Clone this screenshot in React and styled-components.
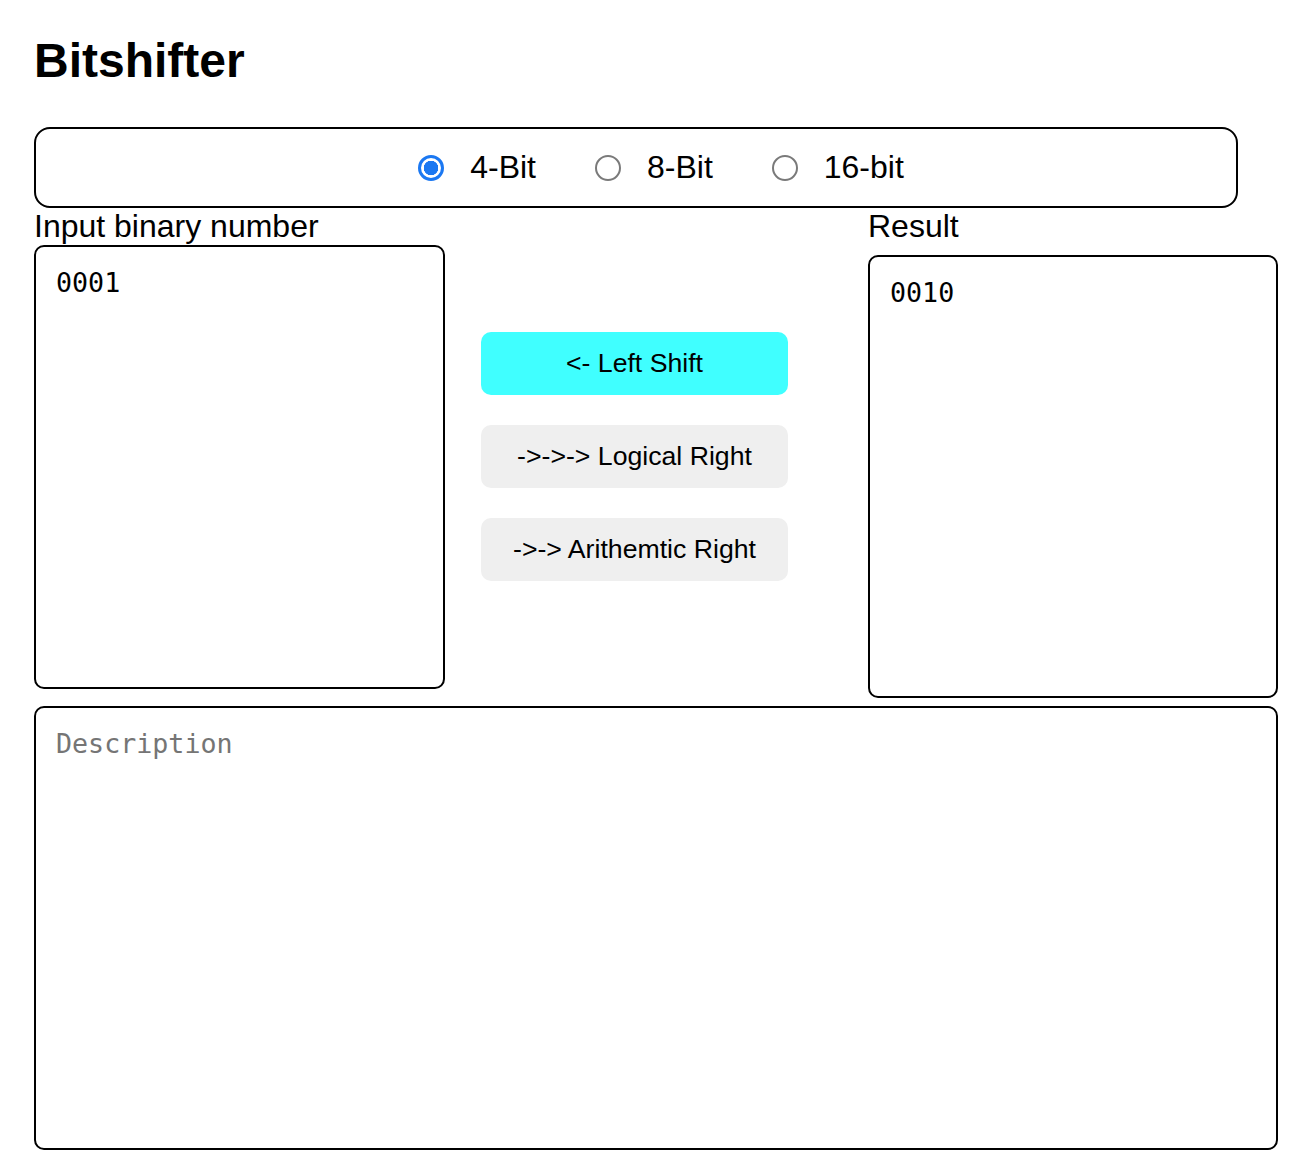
import React, { useState } from 'react'
import styled, { createGlobalStyle } from 'styled-components';

const GlobalStyle = createGlobalStyle`
    body {
        margin: 0;
        background: #ffffff;
        font-family: "Liberation Sans", Arial, Helvetica, sans-serif;
        color: #000;
    }
`

const Page = styled.div`
    padding: 34px 28px 26px 34px;
`

const Title = styled.h2`
    margin: 0 0 39px 0;
    font-size: 48px;
    font-weight: bold;
    line-height: 54px;
`

const BitBox = styled.div`
    box-sizing: border-box;
    width: 1204px;
    height: 81px;
    border: 2px solid #000;
    border-radius: 16px;
    display: flex;
    flex-direction: row;
    align-items: center;
    justify-content: center;
    padding-left: 50px;
    gap: 59px;
`

const Option = styled.label`
    display: flex;
    align-items: center;
    font-size: 32px;
    cursor: pointer;
`

const Radio = styled.input`
    appearance: none;
    margin: 0 26px 0 0;
    width: 26px;
    height: 26px;
    border-radius: 50%;
    border: 2px solid #7a7a7a;
    box-sizing: border-box;
    background: #fff;

    &:checked {
        border: 3px solid #1b78f2;
        background: radial-gradient(circle, #1b78f2 0 7px, #fff 7.5px);
    }
`

const Row = styled.div`
    display: flex;
    flex-direction: row;
    align-items: flex-start;
`

const Column = styled.div`
    display: flex;
    flex-direction: column;
    width: ${props => props.width}px;
`

const Label = styled.div`
    font-size: 32px;
    line-height: 37px;
`

const Box = styled.textarea`
    box-sizing: border-box;
    width: 100%;
    height: ${props => props.height || 444}px;
    margin: ${props => props.top || 0}px 0 0 0;
    padding: 20px;
    border: 2px solid #000;
    border-radius: 10px;
    font-family: "DejaVu Sans Mono", "Liberation Mono", monospace;
    font-size: 26.67px;
    color: #000;
    resize: none;
    outline: none;
    display: block;

    &::placeholder {
        color: #757575;
    }
`

const ButtonColumn = styled.div`
    display: flex;
    flex-direction: column;
    gap: 30px;
    width: 307px;
    margin: 124px 80px 0 36px;
`

const ShiftButton = styled.button`
    height: 63px;
    border: none;
    border-radius: 10px;
    background-color: ${props => props.active ? '#40ffff' : '#efefef'};
    font-family: "Liberation Sans", Arial, sans-serif;
    font-size: 26.67px;
    color: #000;
    cursor: pointer;
`

const Description = styled(Box)`
    width: 1244px;
    margin-top: 8px;
`

const App = () => {
    const [bits, setBits] = useState(4);

    return (
        <Page>
            <GlobalStyle />
            <Title>Bitshifter</Title>
            <BitBox>
                <Option>
                    <Radio type="radio" name="bits" checked={bits === 4} onChange={() => setBits(4)} />
                    4-Bit
                </Option>
                <Option>
                    <Radio type="radio" name="bits" checked={bits === 8} onChange={() => setBits(8)} />
                    8-Bit
                </Option>
                <Option>
                    <Radio type="radio" name="bits" checked={bits === 16} onChange={() => setBits(16)} />
                    16-bit
                </Option>
            </BitBox>
            <Row>
                <Column width={411}>
                    <Label>Input binary number</Label>
                    <Box defaultValue="0001" />
                </Column>
                <ButtonColumn>
                    <ShiftButton active>&lt;- Left Shift</ShiftButton>
                    <ShiftButton>-&gt;-&gt;-&gt; Logical Right</ShiftButton>
                    <ShiftButton>-&gt;-&gt; Arithemtic Right</ShiftButton>
                </ButtonColumn>
                <Column width={410}>
                    <Label>Result</Label>
                    <Box top={10} height={443} value="0010" readOnly />
                </Column>
            </Row>
            <Description placeholder="Description" />
        </Page>
    )
}

export default App;
